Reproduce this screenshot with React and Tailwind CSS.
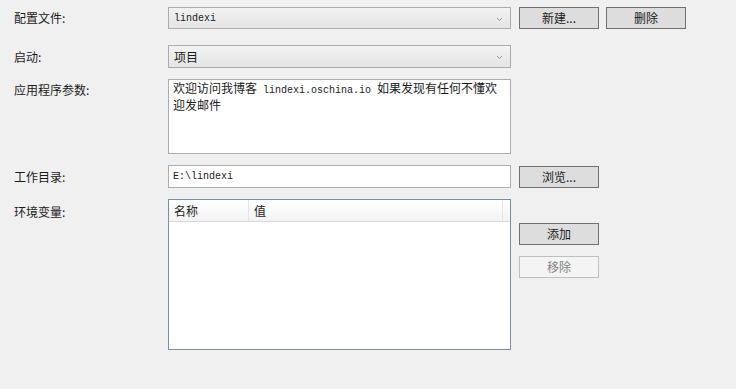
import React from "react";

const cjk = { fontFamily: '"Noto Sans CJK SC", "Noto Sans", sans-serif' };
const mono = { fontFamily: '"Liberation Mono", "DejaVu Sans Mono", monospace' };

function Chevron() {
  return (
    <svg width="7" height="5" viewBox="0 0 7 5" className="absolute right-[7px] top-[9px]">
      <path d="M1 1 L3.5 3.5 L6 1" fill="none" stroke="#9a9a9a" strokeWidth="1" />
    </svg>
  );
}

function Btn({ children, disabled }) {
  return (
    <div
      className={
        "flex h-[22px] w-[80px] items-center justify-center border text-[12px] " +
        (disabled
          ? "border-[#bfbfbf] bg-[#f4f4f4] text-[#838383]"
          : "border-[#707070] bg-[#dddddd] text-[#1a1a1a]")
      }
      style={cjk}
    >
      {children}
    </div>
  );
}

function Label({ children, className = "" }) {
  return (
    <div className={"pl-[14px] text-[12px] leading-[16px] text-[#1a1a1a] " + className} style={cjk}>
      {children}
    </div>
  );
}

export default function App() {
  return (
    <div className="h-[389px] w-[736px] bg-[#f0f0f0] pt-[7px] text-[#1a1a1a]">
      {/* Row 1 */}
      <div className="flex h-[22px] items-center">
        <Label className="w-[168px]">配置文件:</Label>
        <div className="relative flex h-[22px] w-[343px] items-center border border-[#acacac] bg-gradient-to-b from-[#f2f2f2] to-[#e5e5e5] pl-[5px] text-[10px]" style={mono}>
          lindexi
          <Chevron />
        </div>
        <div className="ml-[8px] flex gap-[7px]">
          <Btn>新建...</Btn>
          <Btn>删除</Btn>
        </div>
      </div>
      {/* Row 2 */}
      <div className="mt-[16px] flex h-[23px] items-center">
        <Label className="w-[168px]">启动:</Label>
        <div className="relative flex h-[23px] w-[343px] items-center border border-[#acacac] bg-gradient-to-b from-[#f2f2f2] to-[#e5e5e5] pl-[5px] text-[12px]" style={cjk}>
          项目
          <Chevron />
        </div>
      </div>
      {/* Row 3 */}
      <div className="mt-[11px] flex">
        <Label className="w-[168px] pt-[3px]">应用程序参数:</Label>
        <div className="h-[75px] w-[343px] border border-[#abadb3] bg-white px-[4px] pt-[1px] text-[12px] leading-[14px]" style={cjk}>
          欢迎访问我博客<span className="whitespace-pre text-[10px]" style={mono}> lindexi.oschina.io </span>如果发现有任何不懂欢迎发邮件
        </div>
      </div>
      {/* Row 4 */}
      <div className="mt-[11px] flex h-[23px] items-center">
        <Label className="w-[168px]">工作目录:</Label>
        <div className="flex h-[23px] w-[343px] items-center border border-[#abadb3] bg-white pl-[4px] text-[10px]" style={mono}>
          E:\lindexi
        </div>
        <div className="ml-[8px]">
          <Btn>浏览...</Btn>
        </div>
      </div>
      {/* Row 5 */}
      <div className="mt-[11px] flex">
        <Label className="w-[168px] pt-[5px]">环境变量:</Label>
        <div className="flex h-[151px] w-[343px] flex-col border border-[#7a8ea8] bg-white">
          <div className="flex h-[22px] border-b border-[#d5d9de] bg-gradient-to-b from-[#ffffff] to-[#f3f3f3] text-[12px]" style={cjk}>
            <div className="flex w-[80px] items-center border-r border-[#e3e5e8] pl-[5px]">名称</div>
            <div className="flex w-[254px] items-center border-r border-[#e3e5e8] pl-[5px]">值</div>
            <div className="flex-1" />
          </div>
        </div>
        <div className="ml-[8px] flex flex-col gap-[11px] pt-[24px]">
          <Btn>添加</Btn>
          <Btn disabled>移除</Btn>
        </div>
      </div>
    </div>
  );
}
